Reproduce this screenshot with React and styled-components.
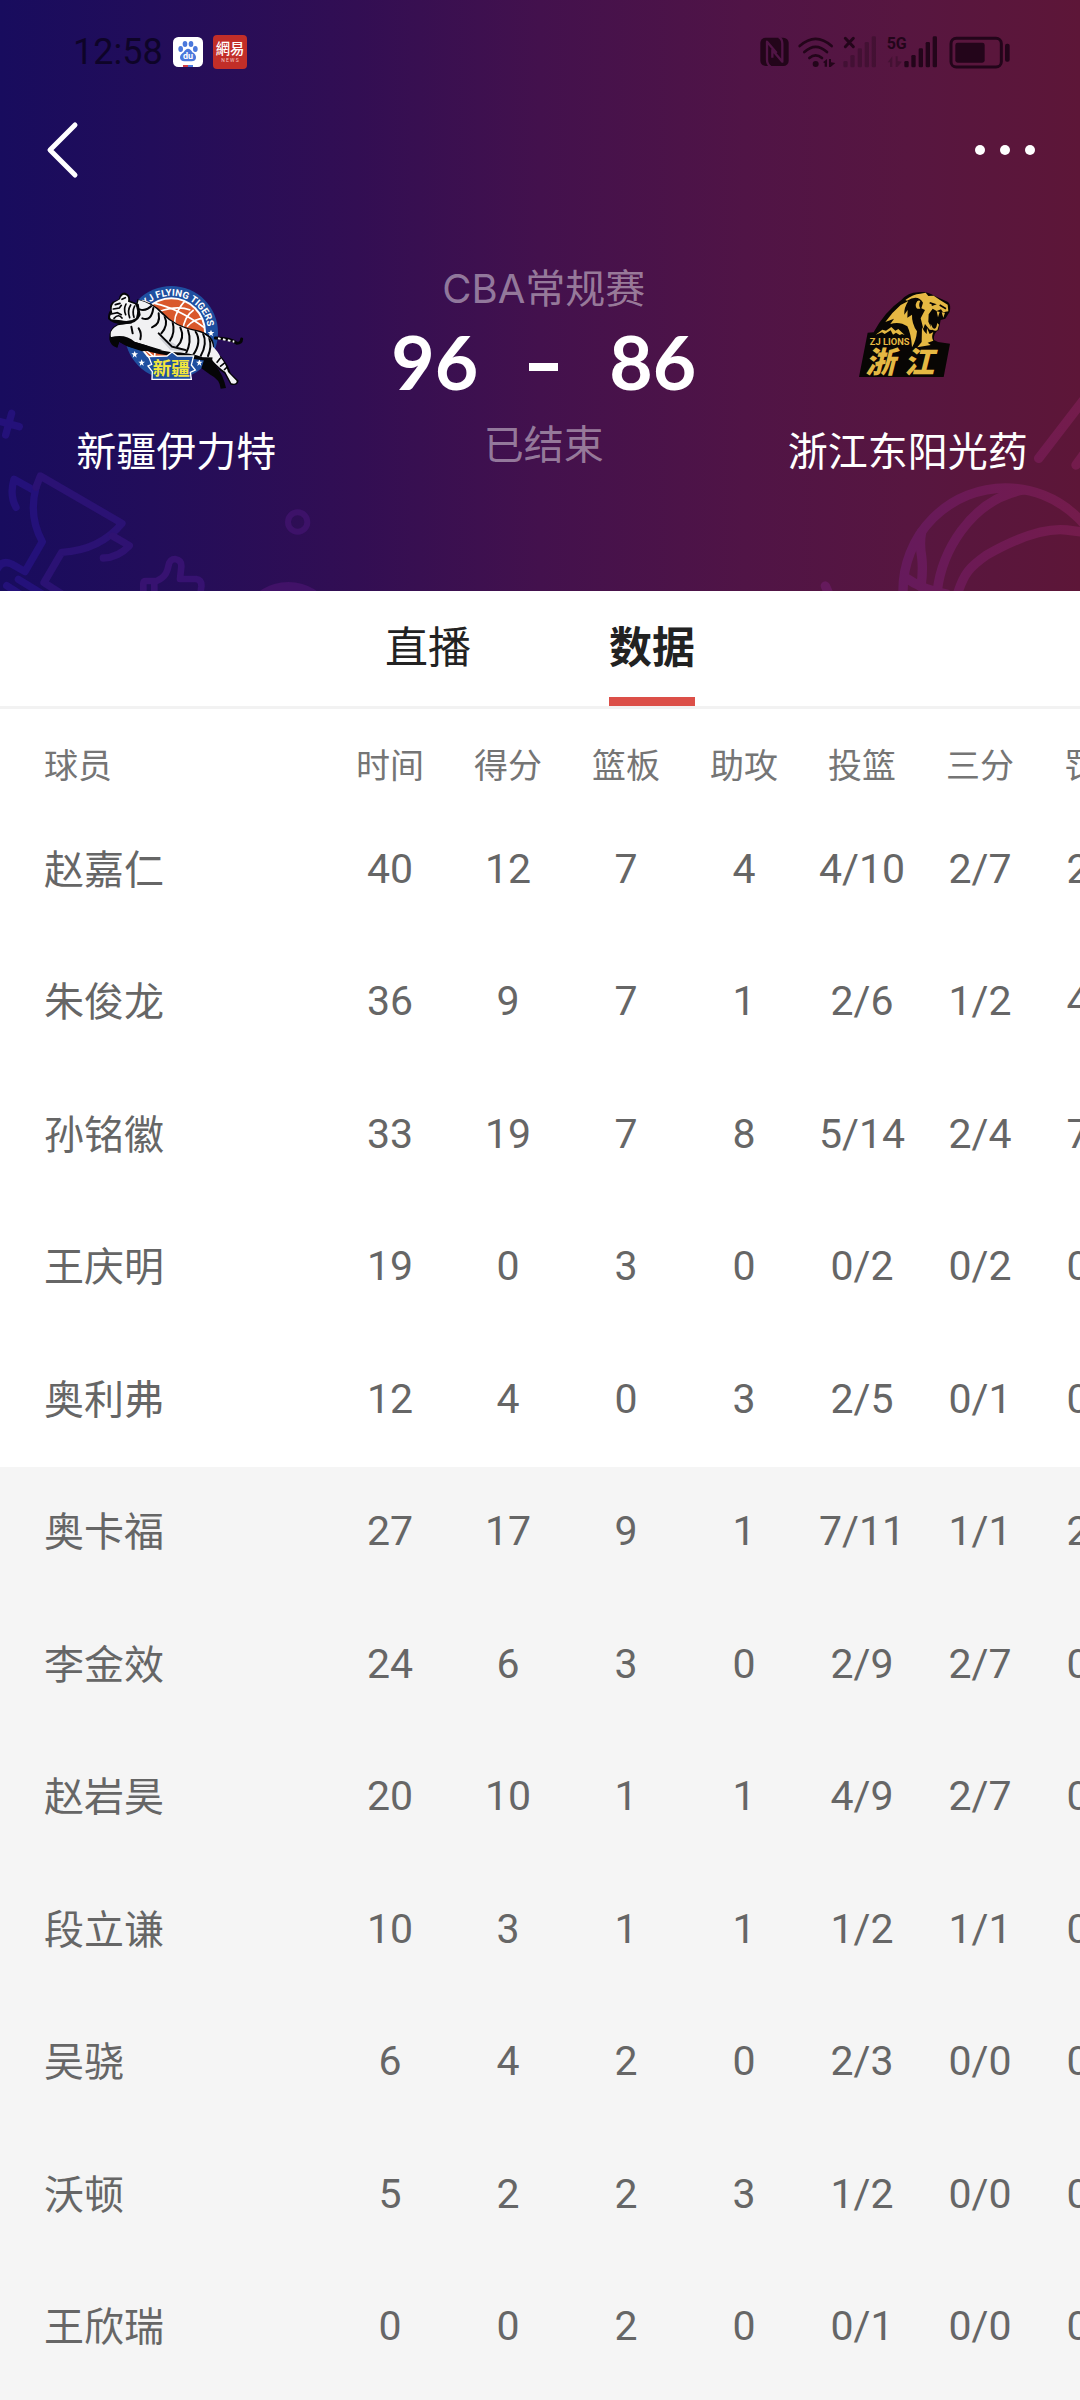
import React from 'react';
import styled, { createGlobalStyle } from 'styled-components';

const columns = ['时间', '得分', '篮板', '助攻', '投篮', '三分', '罚球'];

const players = [
  { name: '赵嘉仁', stats: ['40', '12', '7', '4', '4/10', '2/7', '2/2'] },
  { name: '朱俊龙', stats: ['36', '9', '7', '1', '2/6', '1/2', '4/4'] },
  { name: '孙铭徽', stats: ['33', '19', '7', '8', '5/14', '2/4', '7/8'] },
  { name: '王庆明', stats: ['19', '0', '3', '0', '0/2', '0/2', '0/0'] },
  { name: '奥利弗', stats: ['12', '4', '0', '3', '2/5', '0/1', '0/0'] },
  { name: '奥卡福', stats: ['27', '17', '9', '1', '7/11', '1/1', '2/2'], bench: true },
  { name: '李金效', stats: ['24', '6', '3', '0', '2/9', '2/7', '0/0'], bench: true },
  { name: '赵岩昊', stats: ['20', '10', '1', '1', '4/9', '2/7', '0/0'], bench: true },
  { name: '段立谦', stats: ['10', '3', '1', '1', '1/2', '1/1', '0/0'], bench: true },
  { name: '吴骁', stats: ['6', '4', '2', '0', '2/3', '0/0', '0/0'], bench: true },
  { name: '沃顿', stats: ['5', '2', '2', '3', '1/2', '0/0', '0/0'], bench: true },
  { name: '王欣瑞', stats: ['0', '0', '2', '0', '0/1', '0/0', '0/0'], bench: true },
];

const TrophyArt = () => (
  <LeftArt viewBox="0 0 1080 573" aria-hidden="true">
    <g fill="none" strokeWidth="22" strokeLinecap="round" strokeLinejoin="round">
      <g stroke="#24117a">
        <path d="M-10 62 L58 80 M35 40 L17 105" />
        <path d="M48 322 Q28 285 42 238 L100 270" />
        <path d="M-10 510 Q5 478 35 492 L75 515 L127 425 Q85 350 108 262" />
        <path d="M55 538 L140 590 M20 557 L80 595" />
      </g>
      <path stroke="#2b1274" d="M108 262 L121 228 L366 370 Q300 450 185 457 L132 548 L190 585" />
      <path stroke="#2f1272" d="M338 408 L388 437 Q355 472 310 474" />
      <path
        stroke="#371271"
        strokeWidth="20"
        d="M430 590 V550 Q430 543 438 543 H470 C500 530 503 510 506 495 Q510 477 525 477 Q545 480 544 500 L540 537 H588 Q606 540 604 560 L600 590 M463 545 V590"
      />
      <circle stroke="#3d1269" strokeWidth="18" cx="893" cy="366" r="29" />
    </g>
    <ellipse cx="865" cy="620" rx="110" ry="74" fill="#411268" />
  </LeftArt>
);

const BallArt = () => (
  <RightArt viewBox="0 0 1020 573" aria-hidden="true">
    <defs>
      <linearGradient id="ball" x1="470" x2="1020" y1="0" y2="0" gradientUnits="userSpaceOnUse">
        <stop offset="0" stopColor="#651a5c" />
        <stop offset="0.45" stopColor="#6d1a54" />
        <stop offset="1" stopColor="#741c4c" />
      </linearGradient>
    </defs>
    <g fill="none" stroke="url(#ball)" strokeWidth="28" strokeLinecap="round" strokeLinejoin="round">
      <path d="M896 175 L1060 -38 M1008 195 L1070 110" />
      <circle cx="797" cy="572" r="308" />
      <path d="M545 395 Q538 430 545 470 Q550 510 543 560" />
      <path d="M590 590 C600 460 690 300 850 270" />
      <path d="M650 590 C670 520 690 500 740 465 Q890 380 980 390 L1040 398" />
      <path d="M500 535 Q550 570 620 582" />
      <path stroke="#651a5c" d="M256 558 L275 600" />
    </g>
  </RightArt>
);

const TigerLogo = () => (
  <Logo viewBox="142 75 420 360" role="img" aria-label="新疆伊力特">
    <defs>
      <path id="arc" d="M260 169 A111 111 0 0 1 440 291" />
      <clipPath id="inner">
        <circle cx="338" cy="246" r="101" />
      </clipPath>
      <clipPath id="body">
        <path d="M240 150 Q282 160 310 193 Q350 232 410 243 Q458 254 463 290 Q480 306 486 323 L432 322 Q400 308 335 306 Q290 300 262 286 L180 262 L157 262 Q150 240 178 226 L220 220 Z" />
      </clipPath>
    </defs>
    <circle cx="338" cy="248" r="140" fill="#1f4fa0" />
    <circle cx="338" cy="246" r="104" fill="#fff" />
    <g clipPath="url(#inner)">
      <circle cx="338" cy="246" r="98" fill="#d9582b" />
      <g fill="none" stroke="#fff" strokeWidth="5">
        <path d="M288 160 Q360 175 440 235" />
        <path d="M385 145 Q340 195 350 225" />
        <path d="M405 180 Q375 200 372 245" />
        <path d="M300 185 Q355 165 395 180" />
        <path d="M385 230 Q405 205 440 205" />
        <path d="M262 300 L290 325 M292 285 L285 340" />
      </g>
    </g>
    <text fontFamily="Roboto, sans-serif" fontSize="29" fontWeight="700" fill="#fff">
      <textPath href="#arc">XJ FLYING TIGERS</textPath>
    </text>
    <g fill="#fff">
      {[[457, 249], [453, 283], [441, 314], [422, 338], [228, 313], [249, 338]].map(([x, y]) => (
        <path
          key={`${x}-${y}`}
          transform={`translate(${x} ${y})`}
          d="M0 -10 L3 -3 L10 -3 L4 2 L6 10 L0 5 L-6 10 L-4 2 L-10 -3 L-3 -3 Z"
        />
      ))}
    </g>
    <path d="M470 264 Q518 265 535 280 Q548 280 549 267" fill="none" stroke="#050507" strokeWidth="9" strokeLinecap="round" />
    <path d="M478 265 L527 275" fill="none" stroke="#fff" strokeWidth="6" strokeDasharray="8 7" />
    <path d="M440 318 L486 318 Q510 345 516 370 L540 392 Q538 408 516 404 L497 370 Q480 360 470 345 Q494 375 502 414 L486 416 Q484 388 455 374 L428 355 Z" fill="#050507" />
    <path d="M466 310 L485 322 Q502 342 508 366 L534 393 Q534 404 518 400 L500 366 Q472 346 455 323 Z" fill="#f4f4f6" />
    <path d="M474 338 L487 322 M484 350 L499 338 M496 360 L507 350" stroke="#050507" strokeWidth="5" />
    <path d="M236 148 Q285 157 315 190 Q350 230 415 240 Q462 250 466 285 L460 335 L350 318 Q300 315 255 300 Q205 292 182 275 L176 293 Q155 288 152 268 Q148 236 178 222 L215 215 Z" fill="#050507" />
    <g clipPath="url(#body)">
      <path d="M150 140 H490 V340 H150 Z" fill="#f1f1f3" />
      <path d="M300 262 Q350 275 375 305 L335 300 Z" fill="#cfd0d6" />
      <g fill="none" stroke="#050507" strokeWidth="6" strokeLinecap="round">
        <path d="M243 178 Q262 185 281 165 M251 205 Q278 215 284 174" />
        <path d="M280 232 Q306 222 300 190 M318 200 Q330 225 308 250" />
        <path d="M342 217 Q350 248 334 272 M365 232 Q380 265 355 290" />
        <path d="M388 240 Q400 275 382 310 M411 245 Q430 275 404 314" />
        <path d="M433 250 Q447 280 426 318 M452 265 Q460 290 448 318" />
        <path d="M218 230 L222 250 M240 235 Q250 250 245 268 M300 250 L340 290 L380 300" />
      </g>
    </g>
    <path d="M155 262 Q200 250 228 275 Q265 286 310 300 L250 304 L205 289 L181 275 L175 293 Z" fill="#050507" />
    <path d="M180 148 Q184 126 200 128 Q216 134 214 152 L240 162 L246 195 Q235 222 200 222 Q165 225 148 207 Q147 190 156 180 Q150 166 162 155 Z" fill="#050507" />
    <path d="M184 148 Q190 130 202 136 Q211 140 208 155 L229 163 Q240 180 232 204 Q212 218 187 211 L158 208 Q149 200 161 188 Q155 170 166 158 Z" fill="#f4f4f6" />
    <g fill="none" stroke="#050507" strokeWidth="5" strokeLinecap="round">
      <path d="M190 148 L200 143 M170 164 L184 160 M164 177 L182 174 L188 166" />
      <path d="M158 192 L176 188 L188 194 M166 205 Q180 190 190 204" />
      <path d="M202 162 Q194 178 201 194 M216 165 Q205 182 213 203 M228 168 Q220 184 226 202" />
    </g>
    <path d="M270 320 L325 318 L340 306 L356 318 L405 318 L398 345 L410 360 L395 367 L398 388 L280 388 L281 365 L268 348 L279 343 Z" fill="#1f4fa0" stroke="#fff" strokeWidth="4" />
    <text x="338" y="376" textAnchor="middle" fontFamily="Noto Sans CJK SC, sans-serif" fontSize="56" fontWeight="700" fill="#f2e63c">新疆</text>
  </Logo>
);

const LionLogo = () => (
  <Logo viewBox="205 75 420 360" role="img" aria-label="浙江东阳光药">
    <path d="M294 248 L312 247 Q345 185 395 150 Q415 128 445 127 Q470 122 495 138 L535 156 Q545 165 540 185 L527 206 L513 210 L507 240 Q490 250 493 270 L505 276 L541 281 L522 381 L268 381 Z" fill="#080604" />
    <g fill="#e5b843">
      <path d="M407 150 Q430 132 452 131 L468 128 L476 138 L492 137 Q510 150 534 164 L536 184 L520 187 L514 178 L501 183 L489 176 L477 193 L476 215 L488 240 L480 239 L466 222 L461 236 L453 205 L466 180 L455 175 L460 158 Q445 132 412 152 Z" />
      <path d="M440 158 Q444 149 452 153 Q445 165 452 176 Q438 179 438 164 Z" />
      <path d="M393 165 L416 153 Q402 174 404 194 L414 180 L413 203 L427 194 Q426 221 442 244 Q440 270 427 292 Q424 250 413 229 Q390 213 362 222 L373 206 L347 216 Q368 186 393 165 Z" />
      <path d="M457 231 Q462 245 471 252 L472 234 L480 252 L491 246 Q484 262 491 272 L474 278 L483 285 L443 292 L456 276 Z" />
      <path d="M483 221 L489 233 Q496 240 500 231 L503 219 L508 224 L503 241 Q490 245 483 234 Z" />
      <path d="M501 184 L505 202 L510 186 Z M516 187 L521 203 L526 188 Z" />
      <path d="M318 254 L338 239 L349 242 L365 231 L377 242 L386 237 L405 255 L397 252 L390 255 L379 248 L370 254 L363 241 L345 252 L337 247 Z" />
    </g>
    <path d="M480 158 L494 163 L486 166 M510 165 L529 176" stroke="#080604" strokeWidth="5" fill="none" />
    <g fill="#e5b843" textAnchor="middle">
      <text x="360" y="284" fontFamily="Roboto, sans-serif" fontSize="28" fontWeight="700">ZJ LIONS</text>
      <g fontFamily="Noto Sans CJK SC, sans-serif" fontSize="90" fontStyle="italic" fontWeight="900">
        <text x="332" y="368">浙</text>
        <text x="448" y="368">江</text>
      </g>
    </g>
  </Logo>
);

const BaiduIcon = () => (
  <svg width="30" height="30" viewBox="0 0 90 90" aria-hidden="true">
    <rect width="90" height="90" rx="16" fill="#fff" />
    <g fill="#4a78dc">
      <ellipse cx="36" cy="21" rx="7" ry="9" />
      <ellipse cx="54" cy="21" rx="7" ry="9" />
      <ellipse cx="23" cy="36" rx="7" ry="9" />
      <ellipse cx="67" cy="36" rx="7" ry="9" />
      <path d="M45 35 Q53 35 58 46 Q70 52 69 63 Q67 73 56 73 H34 Q22 72 21 62 Q21 53 32 46 Q38 35 45 35 Z" />
      <path d="M45 84 H60 V90 H45 Z" />
    </g>
    <path d="M30 84 H45 V90 H30 Z" fill="#cf3a42" />
    <text x="45" y="67" textAnchor="middle" fontFamily="Roboto, sans-serif" fontSize="27" fontWeight="700" fill="#fff">du</text>
  </svg>
);

const NeteaseIcon = () => (
  <svg width="34" height="34" viewBox="0 0 102 102" aria-hidden="true">
    <rect width="102" height="102" rx="12" fill="#c22e28" />
    <text x="51" y="58" textAnchor="middle" fontFamily="Noto Sans CJK TC, sans-serif" fontSize="43" fontWeight="500" fill="#fff">網易</text>
    <text x="51" y="81" textAnchor="middle" fontFamily="Roboto, sans-serif" fontSize="15" fill="#f3c9c6">N E W S</text>
  </svg>
);

const StatusIcons = () => (
  <StatusArt viewBox="0 0 750 102" aria-hidden="true">
    <rect x="1" y="8" width="85" height="85" rx="16" fill="#23051a" />
    <g fill="none" stroke="#501545" strokeWidth="7" strokeLinejoin="round">
      <path d="M32 95 Q21 88 21 74 V20 L50 54" />
      <path d="M56 6 Q67 12 67 26 V80 L37 45 V68" />
    </g>
    <g fill="#23051a">
      <circle cx="167" cy="87" r="9" />
      <path d="M189 82 L201 72 V95 H194 V84 Z M207 72 H213 V82 L226 84 L212 96 H207 Z" />
      <rect x="433" y="78" width="13" height="19" rx="4" />
      <rect x="454" y="60" width="13" height="37" rx="4" />
      <rect x="476" y="40" width="13" height="57" rx="4" />
      <rect x="497" y="21" width="13" height="76" rx="4" />
      <rect x="518" y="4" width="13" height="93" rx="4" />
      <rect x="586" y="23" width="88" height="60" rx="7" />
      <rect x="735" y="26" width="14" height="54" rx="6" />
    </g>
    <g fill="none" stroke="#23051a" strokeLinecap="round">
      <path strokeWidth="8" d="M119 33 Q167 -10 215 33 M133 51 Q167 20 201 51 M148 69 Q167 53 186 69" />
      <path strokeWidth="9" d="M256 10 L280 35 M280 10 L256 35" />
      <rect strokeWidth="9" x="573" y="10" width="151" height="86" rx="16" />
    </g>
    <g fill="#000" opacity="0.2">
      <rect x="250" y="78" width="13" height="19" rx="4" />
      <rect x="271" y="60" width="13" height="37" rx="4" />
      <rect x="293" y="40" width="13" height="57" rx="4" />
      <rect x="314" y="21" width="13" height="76" rx="4" />
      <rect x="335" y="4" width="13" height="93" rx="4" />
      <path d="M383 82 L397 64 V96 H390 V82 Z M407 64 H413 V78 L426 80 L412 96 H407 Z" />
    </g>
    <text x="380" y="42" fontFamily="Roboto, sans-serif" fontSize="48" fontWeight="700" fill="#23051a">5G</text>
  </StatusArt>
);

const App = () => {
  return (
    <Page>
      <GlobalStyle />
      <Hero>
        <TrophyArt />
        <BallArt />
        <StatusBar>
          <StatusGroup>
            <Clock>12:58</Clock>
            <BaiduIcon />
            <NeteaseIcon />
          </StatusGroup>
          <StatusIcons />
        </StatusBar>
        <NavBar>
          <IconButton type="button" aria-label="返回">
            <svg width="34" height="60" viewBox="0 0 34 60">
              <path d="M29 5 L4 30 L29 55" fill="none" stroke="#fff" strokeWidth="5" strokeLinecap="round" strokeLinejoin="round" />
            </svg>
          </IconButton>
          <IconButton type="button" aria-label="更多">
            <svg width="60" height="60" viewBox="0 0 60 60">
              <circle cx="5" cy="30" r="5" fill="#fff" />
              <circle cx="30" cy="30" r="5" fill="#fff" />
              <circle cx="55" cy="30" r="5" fill="#fff" />
            </svg>
          </IconButton>
        </NavBar>
        <Scoreboard>
          <Team>
            <TigerLogo />
            <TeamName>新疆伊力特</TeamName>
          </Team>
          <Result>
            <Caption>CBA常规赛</Caption>
            <Score>
              <span>96</span>
              <Dash />
              <span>86</span>
            </Score>
            <Caption>已结束</Caption>
          </Result>
          <Team>
            <LionLogo />
            <TeamName>浙江东阳光药</TeamName>
          </Team>
        </Scoreboard>
      </Hero>
      <Tabs>
        <Tab type="button">直播</Tab>
        <Tab type="button" $active>数据</Tab>
      </Tabs>
      <TableWrap>
        <StatsTable>
          <thead>
            <tr>
              <HeadCell scope="col" $name>球员</HeadCell>
              {columns.map((label) => (
                <HeadCell scope="col" key={label}>{label}</HeadCell>
              ))}
            </tr>
          </thead>
          <tbody>
            {players.map(({ name, stats, bench }) => (
              <PlayerRow key={name} $bench={bench}>
                <NameCell scope="row">{name}</NameCell>
                {stats.map((value, i) => (
                  <StatCell key={columns[i]}>{value}</StatCell>
                ))}
              </PlayerRow>
            ))}
          </tbody>
        </StatsTable>
      </TableWrap>
    </Page>
  );
};

export default App;

const GlobalStyle = createGlobalStyle`
  * {
    box-sizing: border-box;
  }
  body {
    margin: 0;
    background: #f5f5f5;
    font-family: 'Noto Sans CJK SC', sans-serif;
  }
`;

const Page = styled.main`
  min-height: 100vh;
  overflow: hidden;
`;

const Hero = styled.header`
  position: relative;
  min-height: 591px;
  overflow: hidden;
  background: linear-gradient(
    90deg,
    #180c5e 0%,
    #220d5a 14%,
    #320e53 33%,
    #43114d 50%,
    #501446 69%,
    #571640 84%,
    #5d1638 100%
  );
`;

const LeftArt = styled.svg`
  position: absolute;
  left: 0;
  bottom: 0;
  width: 360px;
  height: 191px;
`;

const RightArt = styled.svg`
  position: absolute;
  right: 0;
  bottom: 0;
  width: 340px;
  height: 191px;
  overflow: visible;
`;

const StatusBar = styled.div`
  position: relative;
  display: flex;
  align-items: center;
  justify-content: space-between;
  height: 104px;
  padding: 0 70px 0 73px;
`;

const StatusGroup = styled.div`
  display: flex;
  align-items: center;
  gap: 10px;
`;

const StatusArt = styled.svg`
  width: 250px;
  height: 34px;
  overflow: visible;
`;

const Clock = styled.time`
  font: 400 36px/48px Roboto, sans-serif;
  color: #0e0428;
`;

const NavBar = styled.nav`
  position: relative;
  display: flex;
  align-items: center;
  justify-content: space-between;
  height: 92px;
  padding: 0 45px 0 46px;
`;

const IconButton = styled.button`
  display: flex;
  padding: 0;
  border: none;
  background: none;
  cursor: pointer;
`;

const Scoreboard = styled.section`
  position: relative;
  display: grid;
  grid-template-columns: 46fr 50fr 45fr;
`;

const Team = styled.div`
  display: flex;
  flex-direction: column;
  align-items: center;
  gap: 26px;
  padding-top: 79px;
`;

const Logo = styled.svg`
  width: 140px;
  height: 120px;
`;

const TeamName = styled.span`
  font-size: 40px;
  line-height: 56px;
  color: #fff;
  white-space: nowrap;
`;

const Result = styled.div`
  display: flex;
  flex-direction: column;
  align-items: center;
  padding-top: 65px;
`;

const Caption = styled.span`
  font-family: Inter, 'Noto Sans CJK SC', sans-serif;
  font-size: 40px;
  line-height: 56px;
  color: rgba(255, 255, 255, 0.45);
`;

const Score = styled.div`
  display: flex;
  align-items: center;
  gap: 51px;
  padding-bottom: 12px;
  font: 700 75px/88px Lato, sans-serif;
  color: #fff;
`;

const Dash = styled.span`
  width: 29px;
  height: 8px;
  margin-top: 12px;
  background: #fff;
`;

const Tabs = styled.nav`
  display: flex;
  justify-content: center;
  gap: 138px;
  height: 118px;
  border-bottom: 3px solid #f2f2f2;
  background: #fff;
`;

const Tab = styled.button`
  padding: 0 0 10px;
  border: none;
  border-top: 9px solid transparent;
  border-bottom: 9px solid ${({ $active }) => ($active ? '#dc4f48' : 'transparent')};
  background: none;
  font-family: inherit;
  font-size: 43px;
  font-weight: ${({ $active }) => ($active ? 700 : 400)};
  color: #222;
  cursor: pointer;
`;

const TableWrap = styled.div`
  overflow: hidden;
  background: #fff;
`;

const StatsTable = styled.table`
  table-layout: fixed;
  width: 1157px;
  border-collapse: collapse;
`;

const HeadCell = styled.th`
  width: ${({ $name }) => ($name ? '331px' : '118px')};
  height: 95px;
  padding: ${({ $name }) => ($name ? '14px 0 0 44px' : '14px 0 0')};
  font-size: 34px;
  font-weight: 400;
  line-height: 48px;
  text-align: ${({ $name }) => ($name ? 'left' : 'center')};
  color: #757575;
`;

const PlayerRow = styled.tr`
  height: 132px;
  background: ${({ $bench }) => ($bench ? '#f5f5f5' : '#fff')};

  &:nth-child(odd) {
    height: 133px;
  }
`;

const NameCell = styled.th`
  padding: 0 0 8px 44px;
  font-size: 40px;
  font-weight: 400;
  line-height: 56px;
  text-align: left;
  color: #666;
`;

const StatCell = styled.td`
  padding: 0 0 4px;
  font: 400 41px/56px Roboto, sans-serif;
  text-align: center;
  color: #666;
`;
